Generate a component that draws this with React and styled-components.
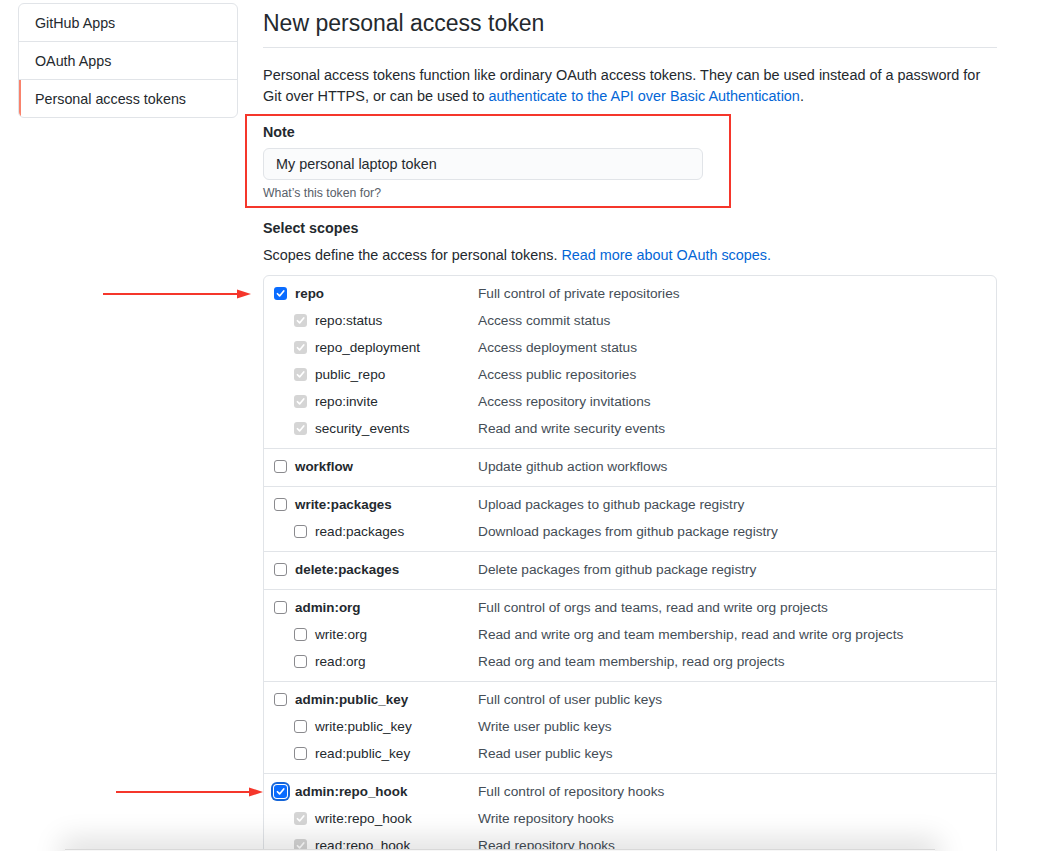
import React from 'react';
import styled, { createGlobalStyle } from 'styled-components';

const GlobalStyle = createGlobalStyle`
  html, body {
    margin: 0;
    padding: 0;
    background: #fff;
  }
  body {
    font-family: 'Liberation Sans', Arial, sans-serif;
    font-size: 14px;
    color: #24292e;
    overflow: hidden;
  }
`;

// Page layout
const Page = styled.div`
  display: flex;
  align-items: flex-start;
  gap: 25px;
  padding: 3px 0 0 18px;
`;

const SideNav = styled.nav`
  width: 220px;
  box-sizing: border-box;
  flex: none;
  border: 1px solid #e1e4e8;
  border-radius: 6px;
  overflow: hidden;
`;

const NavItem = styled.a`
  display: block;
  height: 37px;
  box-sizing: border-box;
  padding: 2px 16px 0;
  line-height: 35px;
  font-size: 14.3px;
  color: #24292e;
  text-decoration: none;
  border-top: ${(p) => (p.$first ? 'none' : '1px solid #e1e4e8')};
  box-shadow: ${(p) => (p.$selected ? 'inset 2px 0 0 #f9826c' : 'none')};
  &:not(:first-child) {
    height: 38px;
  }
`;

const Main = styled.main`
  width: 734px;
  flex: none;
`;

const Subhead = styled.h1`
  margin: 5px 0 0;
  padding-bottom: 9px;
  border-bottom: 1px solid #e1e4e8;
  font-size: 23px;
  line-height: 30px;
  font-weight: 400;
  color: #24292e;
`;

const Lead = styled.p`
  margin: 17px 0 0;
  font-size: 14.45px;
  line-height: 21px;
  color: #24292e;
`;

const Link = styled.a`
  color: #0366d6;
  text-decoration: none;
`;

const FormGroup = styled.div`
  position: relative;
  margin-top: ${(p) => p.$top || 15}px;
`;

const Label = styled.div`
  font-size: 14.3px;
  font-weight: 700;
  line-height: 21px;
`;

const Input = styled.div`
  margin-top: 5px;
  width: 440px;
  height: 32px;
  box-sizing: border-box;
  padding: 0 12px;
  display: flex;
  align-items: center;
  background: #fafbfc;
  border: 1px solid #e1e4e8;
  border-radius: 6px;
  font-size: 14.4px;
  color: #24292e;
`;

const Note = styled.div`
  margin-top: 4px;
  font-size: 12.3px;
  line-height: 18px;
  color: #586069;
`;

// annotation box drawn over the form
const Highlight = styled.div`
  position: absolute;
  left: -18px;
  top: -8px;
  width: 486px;
  height: 94px;
  box-sizing: border-box;
  border: 2px solid #f5362b;
  pointer-events: none;
`;

const Hint = styled.p`
  margin: 6px 0 0;
  font-size: 14.4px;
  line-height: 21px;
`;

const ScopeTable = styled.div`
  margin-top: 9px;
  border: 1px solid #e1e4e8;
  border-radius: 6px;
`;

const ScopeGroup = styled.div`
  padding: 4px 0 6px;
  border-top: ${(p) => (p.$first ? 'none' : '1px solid #e1e4e8')};
`;

const ScopeRow = styled.div`
  position: relative;
  display: grid;
  grid-template-columns: 204px 1fr;
  align-items: center;
  height: 27px;
  padding-left: 10px;
  font-size: 13.7px;
`;

const ScopeName = styled.div`
  display: flex;
  align-items: center;
  gap: 8px;
  padding-left: ${(p) => (p.$child ? 20 : 0)}px;
  font-weight: ${(p) => (p.$child ? 400 : 700)};
  font-size: ${(p) => (p.$child ? 13.6 : 13.4)}px;
  color: #24292e;
`;

const ScopeDesc = styled.div`
  color: #444d56;
`;

const Box = styled.span`
  flex: none;
  width: 13px;
  height: 13px;
  box-sizing: border-box;
  border-radius: 3px;
  display: inline-flex;
  align-items: center;
  justify-content: center;
  background: ${(p) => (p.$state === 'on' ? '#0a6cff' : p.$state === 'dim' ? '#d5d5d5' : '#fff')};
  border: ${(p) => (p.$state === 'off' ? '1px solid #8a8a8e' : 'none')};
  box-shadow: ${(p) => (p.$focus ? '0 0 0 1px #fff, 0 0 0 3px #1565d8' : 'none')};
`;

const Arrow = styled.svg`
  position: absolute;
  right: 100%;
  top: 50%;
  margin-top: -5px;
  margin-right: ${(p) => p.$gap}px;
  overflow: visible;
`;

// shadow of the window below
const BottomEdge = styled.div`
  position: fixed;
  left: 65px;
  width: 870px;
  top: 849px;
  height: 20px;
  background: #f7f7f7;
  border-top: 1px solid #d8d8d8;
  box-shadow: 0 -6px 28px 4px rgba(0, 0, 0, 0.13);
`;

const Check = ({ state, focus }) => (
  <Box $state={state} $focus={focus}>
    {state !== 'off' && (
      <svg width="9" height="9" viewBox="0 0 10 10">
        <path d="M1.6 5.3 L4 7.7 L8.6 2.2" fill="none" stroke="#fff" strokeWidth="1.9" strokeLinecap="round" strokeLinejoin="round" />
      </svg>
    )}
  </Box>
);

const RedArrow = ({ width, gap }) => (
  <Arrow $gap={gap} width={width} height="10" viewBox={`0 0 ${width} 10`}>
    <line x1="0" y1="5" x2={width - 12} y2="5" stroke="#f5362b" strokeWidth="2" />
    <polygon points={`${width - 14},0.5 ${width},5 ${width - 14},9.5`} fill="#f5362b" />
  </Arrow>
);

const scopes = [
  {
    name: 'repo', desc: 'Full control of private repositories', on: true, arrow: { width: 148, gap: 13 },
    children: [
      ['repo:status', 'Access commit status'],
      ['repo_deployment', 'Access deployment status'],
      ['public_repo', 'Access public repositories'],
      ['repo:invite', 'Access repository invitations'],
      ['security_events', 'Read and write security events'],
    ],
  },
  { name: 'workflow', desc: 'Update github action workflows', children: [] },
  {
    name: 'write:packages', desc: 'Upload packages to github package registry',
    children: [['read:packages', 'Download packages from github package registry']],
  },
  { name: 'delete:packages', desc: 'Delete packages from github package registry', children: [] },
  {
    name: 'admin:org', desc: 'Full control of orgs and teams, read and write org projects',
    children: [
      ['write:org', 'Read and write org and team membership, read and write org projects'],
      ['read:org', 'Read org and team membership, read org projects'],
    ],
  },
  {
    name: 'admin:public_key', desc: 'Full control of user public keys',
    children: [
      ['write:public_key', 'Write user public keys'],
      ['read:public_key', 'Read user public keys'],
    ],
  },
  {
    name: 'admin:repo_hook', desc: 'Full control of repository hooks', on: true, focus: true, arrow: { width: 147, gap: 1 },
    children: [
      ['write:repo_hook', 'Write repository hooks'],
      ['read:repo_hook', 'Read repository hooks'],
    ],
  },
  { name: 'admin:org_hook', desc: 'Full control of organization hooks', children: [] },
];

const App = () => {
  return (
    <>
      <GlobalStyle />
      <Page>
        <SideNav>
          <NavItem $first href="#">GitHub Apps</NavItem>
          <NavItem href="#">OAuth Apps</NavItem>
          <NavItem $selected href="#">Personal access tokens</NavItem>
        </SideNav>
        <Main>
          <Subhead>New personal access token</Subhead>
          <Lead>
            Personal access tokens function like ordinary OAuth access tokens. They can be used instead of a password for
            <br />
            Git over HTTPS, or can be used to <Link href="#">authenticate to the API over Basic Authentication</Link>.
          </Lead>
          <FormGroup>
            <Highlight />
            <Label>Note</Label>
            <Input>My personal laptop token</Input>
            <Note>What’s this token for?</Note>
          </FormGroup>
          <FormGroup $top={16}>
            <Label>Select scopes</Label>
            <Hint>
              Scopes define the access for personal tokens. <Link href="#">Read more about OAuth scopes.</Link>
            </Hint>
            <ScopeTable>
              {scopes.map((s, i) => (
                <ScopeGroup key={s.name} $first={i === 0}>
                  <ScopeRow>
                    {s.arrow && <RedArrow width={s.arrow.width} gap={s.arrow.gap} />}
                    <ScopeName>
                      <Check state={s.on ? 'on' : 'off'} focus={s.focus} />
                      {s.name}
                    </ScopeName>
                    <ScopeDesc>{s.desc}</ScopeDesc>
                  </ScopeRow>
                  {s.children.map(([name, desc]) => (
                    <ScopeRow key={name}>
                      <ScopeName $child>
                        <Check state={s.on ? 'dim' : 'off'} />
                        {name}
                      </ScopeName>
                      <ScopeDesc>{desc}</ScopeDesc>
                    </ScopeRow>
                  ))}
                </ScopeGroup>
              ))}
            </ScopeTable>
          </FormGroup>
        </Main>
      </Page>
      <BottomEdge />
    </>
  );
};

export default App;
